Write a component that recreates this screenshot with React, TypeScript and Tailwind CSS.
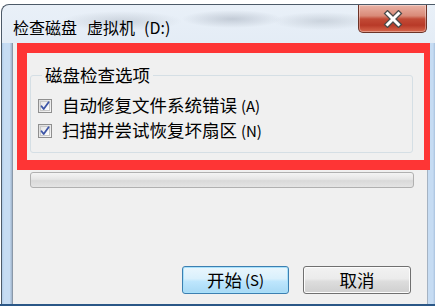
import React from "react";

const font = { fontFamily: '"Noto Sans CJK SC", "Noto Sans", sans-serif' };

function Check() {
  return (
    <span className="relative flex h-[14px] w-[14px] shrink-0 items-center justify-center border border-[#8f8f8f] bg-[linear-gradient(135deg,#dcdcdc,#f6f6f6)]">
      <span className="absolute inset-[1px] border border-[#c8c8c8] bg-[linear-gradient(135deg,#e6e6e6,#ffffff)]" />
      <svg width="12" height="12" viewBox="0 0 12 12" className="relative">
        <path d="M2.5 6.2 L4.7 9 L9.6 2.2" fill="none" stroke="#3d55a6" strokeWidth="1.8" strokeLinecap="round" strokeLinejoin="round" />
      </svg>
    </span>
  );
}

export default function App() {
  return (
    <div className="relative flex h-[306px] w-[435px] flex-col overflow-hidden bg-white" style={font}>
      {/* window */}
      <div className="ml-[1px] mt-[4px] flex h-[300px] w-[434px] flex-col rounded-tl-[8px] border-l border-t border-[#4d5a68] bg-[radial-gradient(ellipse_60px_10px_at_120px_16px,rgba(150,160,172,0.35),transparent),radial-gradient(ellipse_50px_9px_at_230px_14px,rgba(140,150,165,0.4),transparent),radial-gradient(ellipse_50px_9px_at_320px_16px,rgba(150,160,172,0.35),transparent),linear-gradient(180deg,#e9f0f8_0%,#dbe6f2_35%,#d2e3f5_70%,#c7dcf3_100%)]">
        {/* title bar */}
        <div className="flex h-[38px] items-start justify-between pl-[11px] pr-[8px]">
          <div className="flex pt-[11px] text-[16px] leading-[22px] text-black">
            <span>检查磁盘</span>
            <span className="ml-[10px]">虚拟机</span>
            <span className="ml-[9px]">(D:)</span>
          </div>
          <div className="relative flex h-[28px] w-[69px] items-center justify-center rounded-b-[5px] border border-t-0 border-[#6d3328] bg-[linear-gradient(180deg,#eab3a6_0%,#d98a78_40%,#c24a36_52%,#b83a28_75%,#d8684e_100%)] shadow-[inset_0_0_0_1px_rgba(255,255,255,0.35)]">
            <svg width="22" height="18" viewBox="0 0 22 18">
              <path d="M5.5 3.5 L16.5 14.5 M16.5 3.5 L5.5 14.5" stroke="#4a4a4a" strokeWidth="5.5" strokeLinecap="square" />
              <path d="M5.5 3.5 L16.5 14.5 M16.5 3.5 L5.5 14.5" stroke="#ffffff" strokeWidth="3" strokeLinecap="square" />
            </svg>
          </div>
        </div>
        {/* body */}
        <div className="flex flex-1">
          <div className="w-[10px] bg-[linear-gradient(90deg,#aecbe8_0%,#c6dcf3_20%,#c6dcf3_75%,#9fb3ca_100%)]" />
          <div className="flex flex-1 flex-col border-l border-[#8a98a8] bg-[#f0f0f0]">
            <fieldset className="ml-[17px] mr-[14px] mt-[22px] rounded-[3px] border border-[#d5dfe5] pb-[9px] pl-[7px] pt-[8px]">
              <legend className="ml-[4px] px-[3px] text-[17.5px] leading-[20px] text-black">磁盘检查选项</legend>
              <div className="flex h-[25px] items-center gap-[10px]">
                <Check />
                <span className="text-[17.5px] leading-[20px] text-black">
                  自动修复文件系统错误 <span className="text-[15px]">(A)</span>
                </span>
              </div>
              <div className="flex h-[25px] items-center gap-[10px]">
                <Check />
                <span className="text-[17.5px] leading-[20px] text-black">
                  扫描并尝试恢复坏扇区 <span className="text-[15px]">(N)</span>
                </span>
              </div>
            </fieldset>
            <div className="ml-[17px] mr-[13px] mt-[19px] h-[16px] rounded-[3px] border border-[#b0b0b0] bg-[linear-gradient(180deg,#f4f4f4_0%,#e6e6e6_45%,#d9d9d9_55%,#e4e4e4_100%)]" />
            <div className="mb-[10px] mr-[16px] mt-auto flex justify-end gap-[14px]">
              <button className="flex h-[28px] w-[107px] items-center justify-center rounded-[3px] border border-[#3c7fb1] bg-[linear-gradient(180deg,#eaf6fd_0%,#d9f0fc_45%,#bee6fd_55%,#a7d9f5_100%)] text-[17.5px] leading-[20px] text-black shadow-[inset_0_0_0_1px_#a8e1fb]">
                开始<span className="ml-[3px] text-[15px]">(S)</span>
              </button>
              <button className="flex h-[28px] w-[108px] items-center justify-center rounded-[3px] border border-[#707070] bg-[linear-gradient(180deg,#f2f2f2_0%,#ebebeb_45%,#dddddd_55%,#cfcfcf_100%)] text-[17.5px] leading-[20px] text-black shadow-[inset_0_0_0_1px_#fcfcfc]">
                取消
              </button>
            </div>
          </div>
          <div className="w-[8px] border-l border-[#a4b2c2] bg-[linear-gradient(90deg,#c6dcf3_0%,#c6dcf3_70%,#a9c2de_100%)]" />
        </div>
      </div>
      <div className="h-[2px] w-full bg-[#2a5787]" />
      {/* red annotation box */}
      <div className="pointer-events-none absolute left-[17px] top-[43px] h-[127px] w-[413px] border-[10px] border-r-[6px] border-[#fe3535]" />
    </div>
  );
}
